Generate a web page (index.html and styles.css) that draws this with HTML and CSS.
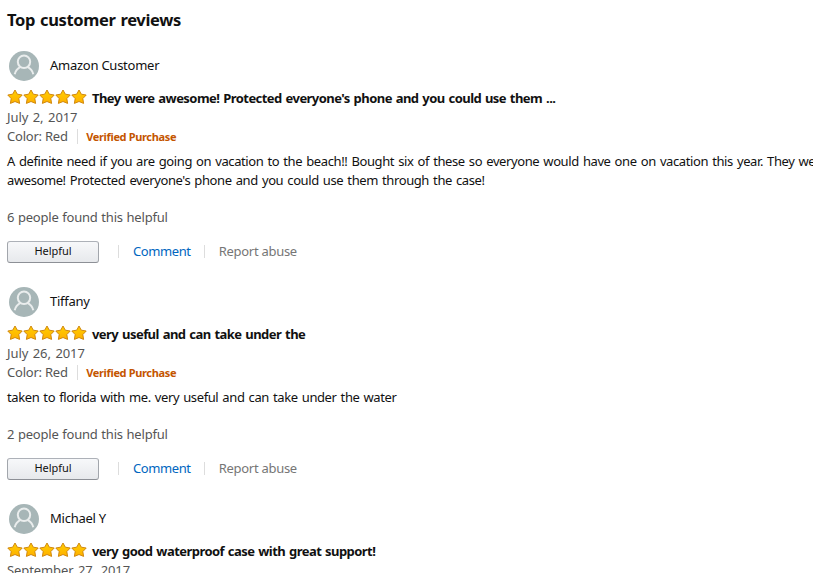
FILE: index.html
```html
<!DOCTYPE html>
<html lang="en">
<head>
  <meta charset="UTF-8" />
  <meta name="viewport" content="width=device-width, initial-scale=1.0" />
  <title>Top customer reviews</title>
  <link rel="stylesheet" href="styles.css">
</head>
<body>
  <!-- shared icons -->
  <svg class="defs" width="0" height="0">
    <defs>
      <linearGradient id="gold" x1="0" y1="0" x2="0" y2="1">
        <stop offset="0" stop-color="#ffce00" />
        <stop offset="1" stop-color="#ffb000" />
      </linearGradient>
      <path id="star" d="M8 1 L10.3 5.2 L15.2 6 L11.8 9.6 L12.6 14.4 L8 12.5 L3.4 14.4 L4.2 9.6 L.8 6 L5.7 5.2 Z" fill="url(#gold)" stroke="#d0880f" stroke-width="1" stroke-linejoin="round" />
      <symbol id="stars" viewBox="0 0 80 16">
        <use href="#star" x="0" />
        <use href="#star" x="16" />
        <use href="#star" x="32" />
        <use href="#star" x="48" />
        <use href="#star" x="64" />
      </symbol>
      <symbol id="avatar" viewBox="0 0 30 30">
        <circle cx="15" cy="15" r="15" fill="#a7b6b7" />
        <g fill="none" stroke="#eaeded" stroke-width="2">
          <circle cx="15" cy="10.8" r="6.2" />
          <path d="M5.7 23.2 C6.5 19.7 8.5 17.3 11.6 15.8 M18.4 15.8 C21.5 17.3 23.5 19.7 24.3 23.2" />
        </g>
      </symbol>
    </defs>
  </svg>

  <h1>Top customer reviews</h1>

  <div class="review">
    <div class="profile">
      <svg class="avatar"><use href="#avatar" /></svg>
      <span class="name">Amazon Customer</span>
    </div>
    <div class="rating">
      <svg class="stars"><use href="#stars" /></svg>
      <span class="title">They were awesome! Protected everyone's phone and you could use them ...</span>
    </div>
    <div class="date">July 2, 2017</div>
    <div class="format">
      <span class="color">Color: Red</span>
      <span class="verified">Verified Purchase</span>
    </div>
    <p class="text">A definite need if you are going on vacation to the beach!! Bought six of these so everyone would have one on vacation this year. They were<br>awesome! Protected everyone's phone and you could use them through the case!</p>
    <div class="votes">6 people found this helpful</div>
    <div class="actions">
      <button>Helpful</button>
      <a class="comment" href="#">Comment</a>
      <a class="report" href="#">Report abuse</a>
    </div>
  </div>

  <div class="review">
    <div class="profile">
      <svg class="avatar"><use href="#avatar" /></svg>
      <span class="name">Tiffany</span>
    </div>
    <div class="rating">
      <svg class="stars"><use href="#stars" /></svg>
      <span class="title">very useful and can take under the</span>
    </div>
    <div class="date">July 26, 2017</div>
    <div class="format">
      <span class="color">Color: Red</span>
      <span class="verified">Verified Purchase</span>
    </div>
    <p class="text">taken to florida with me. very useful and can take under the water</p>
    <div class="votes">2 people found this helpful</div>
    <div class="actions">
      <button>Helpful</button>
      <a class="comment" href="#">Comment</a>
      <a class="report" href="#">Report abuse</a>
    </div>
  </div>

  <div class="review">
    <div class="profile">
      <svg class="avatar"><use href="#avatar" /></svg>
      <span class="name">Michael Y</span>
    </div>
    <div class="rating">
      <svg class="stars"><use href="#stars" /></svg>
      <span class="title">very good waterproof case with great support!</span>
    </div>
    <div class="date">September 27, 2017</div>
  </div>
</body>
</html>
```
FILE: styles.css
```css
body {
  margin: 0;
  padding: 8px 0 0 7px;
  height: 565px;
  overflow: hidden;
  background: #fff;
  color: #111;
  font-family: "Noto Sans", "Open Sans", sans-serif;
  font-size: 13px;
  line-height: 19px;
  letter-spacing: -0.22px;
  white-space: nowrap;
}

.defs {
  display: block;
}

h1 {
  margin: 0 0 16px;
  font-size: 16.5px;
  line-height: 24px;
  font-weight: 700;
  letter-spacing: -0.35px;
  word-spacing: 1px;
}

.review {
  margin-bottom: 21px;
}

.profile {
  display: flex;
  align-items: center;
  height: 36px;
  padding-left: 2px;
  margin-bottom: 5px;
}

.avatar {
  width: 30px;
  height: 30px;
  margin-right: 11px;
}

.name {
  padding-bottom: 2px;
  letter-spacing: -0.25px;
}

.rating {
  display: flex;
  align-items: center;
}

.stars {
  width: 80px;
  height: 16px;
  margin: -3px 5px 0 0;
}

.title {
  font-weight: 700;
  letter-spacing: -0.55px;
  word-spacing: 1px;
}

.date,
.color,
.votes {
  color: #555;
}

.date {
  letter-spacing: -0.1px;
  word-spacing: 1.3px;
}

.format {
  display: flex;
  align-items: center;
  height: 19px;
}

.verified {
  margin-left: 9px;
  padding-left: 8.5px;
  border-left: 1px solid #ddd;
  color: #c45500;
  font-size: 11px;
  line-height: 15px;
  font-weight: 700;
  letter-spacing: -0.35px;
}

.text {
  margin: 6px 0 18px;
  letter-spacing: -0.4px;
  word-spacing: 1.1px;
}

.votes {
  margin-bottom: 14px;
  letter-spacing: -0.2px;
  word-spacing: 0.5px;
}

.actions {
  display: flex;
  align-items: center;
  height: 22px;
}

button {
  box-sizing: border-box;
  width: 92px;
  height: 22px;
  padding: 0 0 2px;
  margin-right: 19px;
  border: 1px solid;
  border-color: #adb1b8 #a2a6ac #8d9096;
  border-radius: 3px;
  background: linear-gradient(to bottom, #f7f8fa, #e7e9ec);
  color: #111;
  font-family: inherit;
  font-size: 11px;
  line-height: 16px;
  letter-spacing: -0.05px;
}

.comment,
.report {
  padding-left: 14px;
  margin-bottom: 2px;
  border-left: 1px solid #ddd;
  line-height: 13px;
  text-decoration: none;
}

.comment {
  margin-right: 13px;
  color: #0066c0;
  letter-spacing: -0.4px;
}

.report {
  color: #767676;
  letter-spacing: -0.28px;
}
```
